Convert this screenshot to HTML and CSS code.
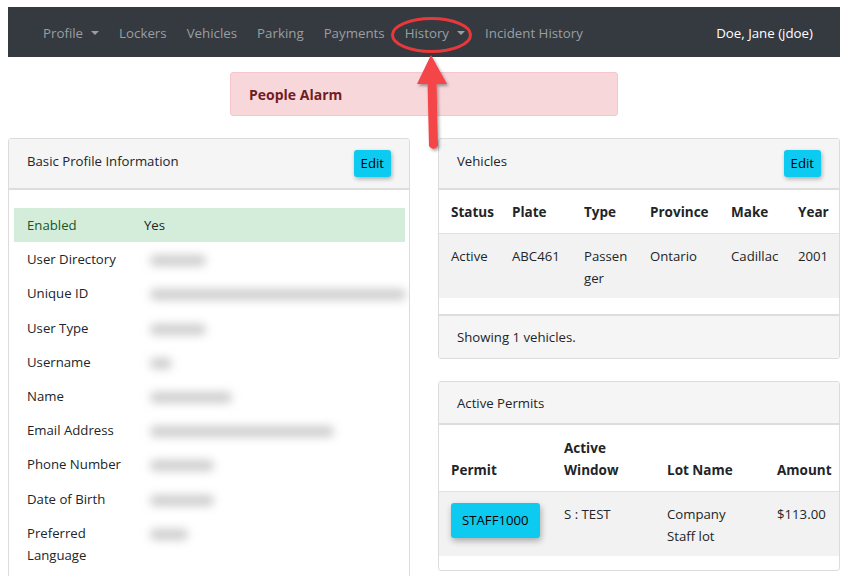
FILE: index.html
```html
<!DOCTYPE html>
<html lang="en">
<head>
<meta charset="utf-8">
<title>Profile</title>
<link rel="stylesheet" href="styles.css">
</head>
<body>
<div class="page">
  <nav class="navbar">
    <ul class="nav-links">
      <li class="nav-item">Profile<span class="caret"></span></li>
      <li class="nav-item">Lockers</li>
      <li class="nav-item">Vehicles</li>
      <li class="nav-item">Parking</li>
      <li class="nav-item">Payments</li>
      <li class="nav-item">History<span class="caret"></span></li>
      <li class="nav-item">Incident History</li>
    </ul>
    <div class="nav-user">Doe, Jane (jdoe)</div>
  </nav>

  <div class="alert">People Alarm</div>

  <div class="columns">
    <section class="card card-tall">
      <header class="card-header">
        <span class="card-title">Basic Profile Information</span>
        <button class="btn btn-info btn-sm">Edit</button>
      </header>
      <div class="card-body">
        <table class="info-table">
          <tr class="row-success"><td class="lbl">Enabled</td><td class="val">Yes</td></tr>
          <tr><td class="lbl">User Directory</td><td class="val"><span class="blur" style="width:56px"></span></td></tr>
          <tr><td class="lbl">Unique ID</td><td class="val"><span class="blur" style="width:256px"></span></td></tr>
          <tr><td class="lbl">User Type</td><td class="val"><span class="blur" style="width:56px"></span></td></tr>
          <tr><td class="lbl">Username</td><td class="val"><span class="blur" style="width:22px"></span></td></tr>
          <tr><td class="lbl">Name</td><td class="val"><span class="blur" style="width:82px"></span></td></tr>
          <tr><td class="lbl">Email Address</td><td class="val"><span class="blur" style="width:184px"></span></td></tr>
          <tr><td class="lbl">Phone Number</td><td class="val"><span class="blur" style="width:64px"></span></td></tr>
          <tr><td class="lbl">Date of Birth</td><td class="val"><span class="blur" style="width:64px"></span></td></tr>
          <tr><td class="lbl">Preferred Language</td><td class="val top"><span class="blur" style="width:38px"></span></td></tr>
        </table>
      </div>
    </section>

    <div class="stack">
      <section class="card">
        <header class="card-header">
          <span class="card-title">Vehicles</span>
          <button class="btn btn-info btn-sm">Edit</button>
        </header>
        <div class="card-table">
          <table class="data-table vehicles">
            <thead>
              <tr><th class="c-status">Status</th><th class="c-plate">Plate</th><th class="c-type">Type</th><th class="c-prov">Province</th><th class="c-make">Make</th><th class="c-year">Year</th></tr>
            </thead>
            <tbody>
              <tr><td>Active</td><td>ABC461</td><td>Passen<br>ger</td><td>Ontario</td><td>Cadillac</td><td>2001</td></tr>
            </tbody>
          </table>
        </div>
        <footer class="card-footer">Showing 1 vehicles.</footer>
      </section>

      <section class="card">
        <header class="card-header plain">
          <span class="card-title">Active Permits</span>
        </header>
        <div class="card-table short">
          <table class="data-table permits">
            <thead>
              <tr><th class="c-permit">Permit</th><th class="c-window">Active<br>Window</th><th class="c-lot">Lot Name</th><th class="c-amount">Amount</th></tr>
            </thead>
            <tbody>
              <tr><td><button class="btn btn-info">STAFF1000</button></td><td>S : TEST</td><td>Company<br>Staff lot</td><td>$113.00</td></tr>
            </tbody>
          </table>
        </div>
      </section>
    </div>
  </div>

  <svg class="annotation" width="120" height="170" viewBox="0 0 120 170" aria-hidden="true">
    <defs>
      <filter id="sh" x="-30%" y="-30%" width="160%" height="160%">
        <feDropShadow dx="1.5" dy="2" stdDeviation="1.5" flood-color="#000" flood-opacity="0.35"/>
      </filter>
    </defs>
    <ellipse cx="61.5" cy="35" rx="39" ry="16.5" fill="none" stroke="#e8383a" stroke-width="3"/>
    <g filter="url(#sh)" fill="#f44448">
      <polygon points="61,55 47,84 77,84"/>
      <path d="M57.5 82 L66.5 82 L68 146 Q63.5 152 59 146 Z"/>
    </g>
  </svg>
</div>
</body>
</html>
```

FILE: styles.css
```css
* { box-sizing: border-box; }

html, body {
  margin: 0;
  padding: 0;
  background: #ffffff;
}

body {
  font-family: "Open Sans", "Noto Sans", "Liberation Sans", sans-serif;
  font-size: 13.2px;
  line-height: 21px;
  color: #212529;
  overflow: hidden;
}

.page {
  position: relative;
  padding: 7px 14px 0 8px;
}

/* Navbar */
.navbar {
  display: flex;
  align-items: center;
  justify-content: space-between;
  height: 50px;
  background: #343a40;
  padding: 2px 27px 0 25px;
}

.nav-links {
  display: flex;
  list-style: none;
  margin: 0;
  padding: 0;
}

.nav-item {
  display: flex;
  align-items: center;
  padding: 0 10px;
  color: #9b9ea1;
  font-size: 13.3px;
}

.caret {
  display: inline-block;
  margin-left: 8px;
  border-top: 4px solid #9b9ea1;
  border-left: 4px solid transparent;
  border-right: 4px solid transparent;
}

.nav-user {
  color: #ffffff;
  font-size: 13.3px;
}

/* Alert */
.alert {
  width: 388px;
  height: 44px;
  margin: 15px auto 22px;
  padding: 0 18px;
  display: flex;
  align-items: center;
  background: #f8d7da;
  border: 1px solid #f5c6cb;
  border-radius: 3px;
  color: #721c24;
  font-weight: 700;
  font-size: 14px;
}

/* Columns */
.columns {
  display: grid;
  grid-template-columns: 402px 402px;
  column-gap: 28px;
  align-items: start;
}

.stack {
  display: flex;
  flex-direction: column;
  gap: 22px;
}

/* Cards */
.card {
  background: #ffffff;
  border: 1px solid #dcdcdc;
  border-radius: 3px;
  overflow: hidden;
}

.card-header {
  display: flex;
  justify-content: space-between;
  align-items: flex-start;
  padding: 11px 18px;
  background: #f5f5f5;
  border-bottom: 2px solid #dddddd;
  min-height: 50px;
}

.card-header.plain {
  min-height: 43px;
  padding: 10px 18px 9px;
}

.card-title {
  line-height: 22px;
}

.btn {
  font-family: inherit;
  border: 0;
  border-radius: 3px;
  color: #000000;
  cursor: pointer;
}

.btn-info {
  background: #0dcaf0;
  box-shadow: 1px 3px 6px rgba(0, 0, 0, 0.3);
  font-size: 13.2px;
  line-height: 21px;
  padding: 7px 11px;
}

.btn-sm {
  margin-top: 0;
  padding: 3px 7px;
  height: 27px;
  box-shadow: 1px 2px 4px rgba(0, 0, 0, 0.3);
}

.card-body {
  padding: 18px 4px 30px 5px;
}

/* Info table */
.info-table {
  width: 100%;
  border-collapse: collapse;
  table-layout: fixed;
}

.info-table td {
  padding: 6.1px 13px;
  line-height: 22px;
  vertical-align: middle;
}

.info-table .lbl {
  width: 130px;
}

.info-table .val {
  padding-left: 0;
}

.info-table .val.top {
  vertical-align: top;
}

.row-success {
  background: #d4edda;
}

.row-success .lbl {
  color: #155724;
}

.blur {
  display: inline-block;
  height: 11px;
  margin-left: 6px;
  background: #cdcdcd;
  border-radius: 5px;
  filter: blur(5px);
  vertical-align: middle;
}

/* Data tables */
.data-table {
  width: 100%;
  border-collapse: collapse;
  table-layout: fixed;
}

.data-table th,
.data-table td {
  text-align: left;
  padding: 11px 0 10px 12px;
  line-height: 22px;
}

.data-table th {
  vertical-align: bottom;
  font-weight: 700;
  font-size: 13.5px;
  border-bottom: 1px solid #dee2e6;
}

.data-table td {
  vertical-align: top;
  background: #f2f2f2;
  padding-bottom: 9px;
}

.permits th {
  padding-top: 12px;
}

.c-status { width: 61px; }
.c-plate { width: 72px; }
.c-type { width: 66px; }
.c-prov { width: 81px; }
.c-make { width: 67px; }
.c-year { width: auto; }

.c-permit { width: 113px; }
.c-window { width: 103px; }
.c-lot { width: 110px; }
.c-amount { width: auto; }

.card-table {
  padding-bottom: 16px;
}

.card-table.short {
  padding-bottom: 14px;
}

.card-footer {
  padding: 0 18px;
  height: 44px;
  display: flex;
  align-items: center;
  background: #f5f5f5;
  border-top: 2px solid #dddddd;
}

/* Annotation overlay */
.annotation {
  position: absolute;
  left: 370px;
  top: 0;
  pointer-events: none;
}
```
